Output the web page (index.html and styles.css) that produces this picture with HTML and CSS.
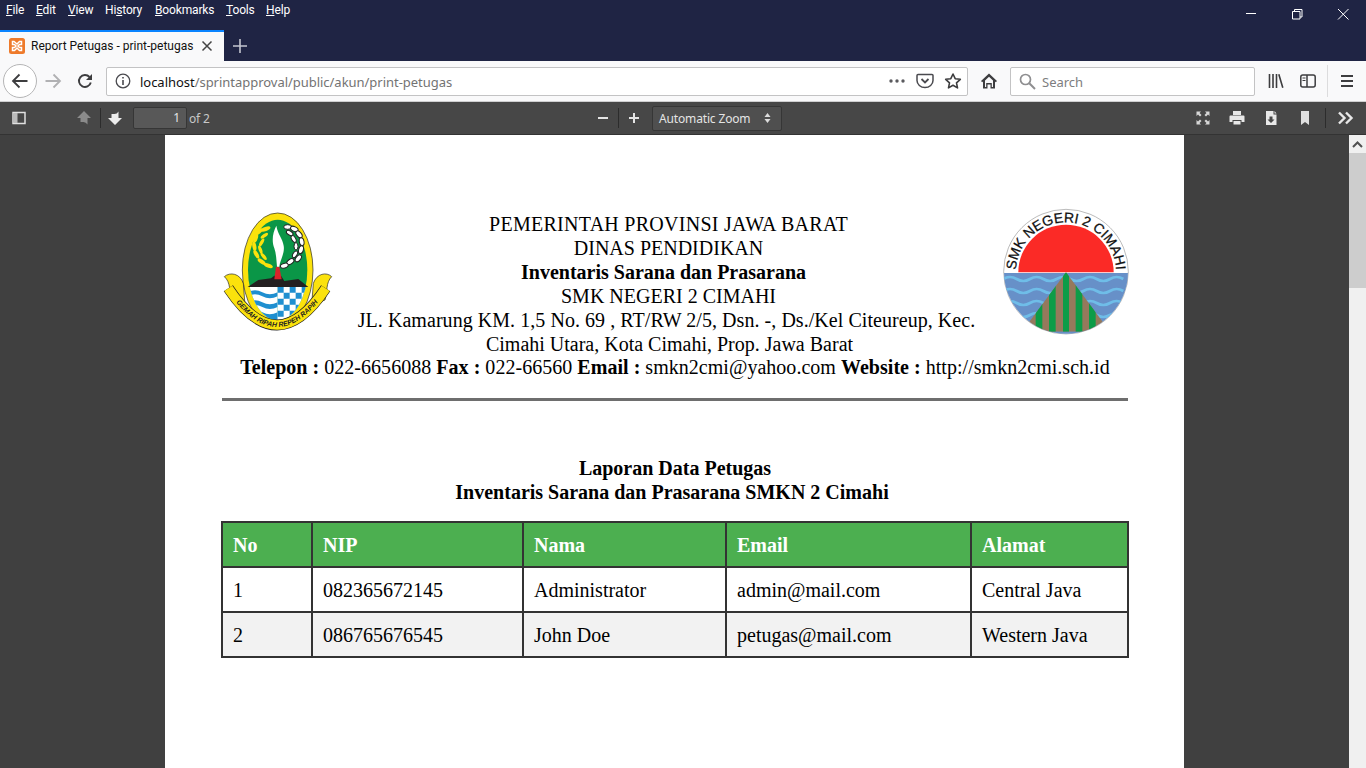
FILE: index.html
```html
<!DOCTYPE html>
<html lang="en">

<head>
    <meta charset="UTF-8">
    <meta name="viewport" content="width=device-width, initial-scale=1.0">
    <title>Report Petugas - print-petugas</title>
    <link rel="stylesheet" href="styles.css">
</head>

<body>
    <div class="menubar">
        <ul class="menu">
            <li class="mFile"><u>F</u>ile</li>
            <li class="mEdit"><u>E</u>dit</li>
            <li class="mView"><u>V</u>iew</li>
            <li class="mHistory">Hi<u>s</u>tory</li>
            <li class="mBookmarks"><u>B</u>ookmarks</li>
            <li class="mTools"><u>T</u>ools</li>
            <li class="mHelp"><u>H</u>elp</li>
        </ul>
        <div class="winBtns">
            <svg width="46" height="30" viewBox="0 0 46 30"><path d="M18 13.5h10" stroke="#fff" fill="none"/></svg>
            <svg width="46" height="30" viewBox="0 0 46 30"><path d="M18.500 11.500h7.500v7.500h-7.500zM20.500 11.500v-2h7.500v7.500h-2" stroke="#fff" fill="none"/></svg>
            <svg width="46" height="30" viewBox="0 0 46 30"><path d="M18 9l10.500 10.500M28.500 9l-10.500 10.500" stroke="#fff" fill="none"/></svg>
        </div>
    </div>

    <div class="tabbar">
        <div class="tab">
            <svg class="favicon" width="16" height="16" viewBox="0 0 16 16">
                <rect width="16" height="16" rx="2.500" fill="#ee7a2b"/>
                <path d="M5 3.500h-1.500v3h2l1.500 1.500-1.500 1.500h-2v3h2l2.500-2.500 2.500 2.500h2v-3h-2l-1.500-1.500 1.500-1.500h2v-3h-2l-2.500 2.500z" fill="none" stroke="#fff" stroke-width="1.500"/>
            </svg>
            <span class="tabTitle">Report Petugas - print-petugas</span>
            <svg class="tabClose" width="12" height="12" viewBox="0 0 12 12"><path d="M1.500 1.500l9 9M10.500 1.500l-9 9" stroke="#444" stroke-width="1.500"/></svg>
        </div>
        <svg class="newTab" width="14" height="14" viewBox="0 0 14 14"><path d="M7 0v14M0 7h14" stroke="#c3c5cf" stroke-width="1.600"/></svg>
    </div>

    <div class="navbar">
        <div class="navBtn backBtn">
            <svg width="18" height="16" viewBox="0 0 18 16"><path d="M16.500 8h-14M8.500 1.500l-6.500 6.500 6.500 6.500" stroke="#3d3d3f" stroke-width="1.800" fill="none"/></svg>
        </div>
        <div class="navBtn">
            <svg width="18" height="16" viewBox="0 0 18 16"><path d="M1.500 8h14M9.500 1.500l6.500 6.500-6.500 6.500" stroke="#b1b1b3" stroke-width="1.800" fill="none"/></svg>
        </div>
        <div class="navBtn">
            <svg width="16" height="16" viewBox="0 0 16 16"><path d="M13.800 9.500a6 6 0 1 1-1.300-5.500" stroke="#3d3d3f" stroke-width="1.900" fill="none"/><path d="M15 1v6h-6z" fill="#3d3d3f"/></svg>
        </div>
        <div class="urlbar">
            <svg class="infoIcon" width="16" height="16" viewBox="0 0 16 16"><circle cx="8" cy="8" r="6.800" stroke="#4a4a4f" stroke-width="1.300" fill="none"/><path d="M8 7v5M8 4v1.600" stroke="#4a4a4f" stroke-width="1.600"/></svg>
            <span class="url"><span class="urlHost">localhost</span>/sprintapproval/public/akun/print-petugas</span>
            <div class="urlActions">
                <svg width="28" height="16" viewBox="0 0 28 16"><circle cx="8" cy="8" r="1.700" fill="#5a5a5e"/><circle cx="14" cy="8" r="1.700" fill="#5a5a5e"/><circle cx="20" cy="8" r="1.700" fill="#5a5a5e"/></svg>
                <svg width="28" height="16" viewBox="0 0 28 16"><path d="M7 1.500h14a1 1 0 0 1 1 1v5a8 7 0 0 1-16 0v-5a1 1 0 0 1 1-1z" stroke="#4a4a4f" stroke-width="1.500" fill="none"/><path d="M10.500 6l3.500 3.500 3.500-3.500" stroke="#4a4a4f" stroke-width="1.800" fill="none"/></svg>
                <svg width="28" height="16" viewBox="0 0 28 16"><path d="M14 1l2.200 4.700 5.100.6-3.800 3.500 1 5.100-4.500-2.600-4.500 2.600 1-5.100-3.800-3.500 5.100-.6z" stroke="#3d3d3f" stroke-width="1.600" fill="none" stroke-linejoin="round"/></svg>
            </div>
        </div>
        <div class="navBtn homeBtn">
            <svg width="16" height="16" viewBox="0 0 16 16"><path d="M8 .5l8 7.500-1.200 1.200-.8-.7v7h-4.500v-4h-3v4h-4.500v-7l-.8.7-1.200-1.200z" fill="#3d3d3f"/><path d="M4 7.500l4-3.700 4 3.700v6.500h-1.200v-4h-5.600v4h-1.200z" fill="#f9f9fa"/></svg>
        </div>
        <div class="searchbar">
            <svg width="17" height="17" viewBox="0 0 17 17"><circle cx="6.500" cy="6.500" r="5" stroke="#8e8e90" stroke-width="1.700" fill="none"/><path d="M10.300 10.300l5.700 5.700" stroke="#8e8e90" stroke-width="2"/></svg>
            <span class="searchText">Search</span>
        </div>
        <div class="navBtn libBtn">
            <svg width="16" height="16" viewBox="0 0 16 16"><path d="M1.500 1v14M5 1v14M8.500 1v14M10.800 1.300l4 13.500" stroke="#3d3d3f" stroke-width="1.600" fill="none"/></svg>
        </div>
        <div class="navBtn">
            <svg width="16" height="14" viewBox="0 0 16 14"><rect x=".8" y="1" width="14.400" height="12" rx="2" stroke="#3d3d3f" stroke-width="1.500" fill="none"/><path d="M7 1v12" stroke="#3d3d3f" stroke-width="1.500"/><path d="M2.500 4h3M2.500 6.500h3" stroke="#3d3d3f"/></svg>
        </div>
        <span class="navSep"></span>
        <div class="navBtn menuBtn">
            <svg width="14" height="14" viewBox="0 0 14 14"><path d="M1 2h12M1 7h12M1 12h12" stroke="#3d3d3f" stroke-width="1.800"/></svg>
        </div>
    </div>

    <div class="pdfbar">
        <div class="pdfLeft">
            <svg class="pdfIcon sidebarIcon" width="16" height="16" viewBox="0 0 16 16"><rect x="2" y="2.500" width="12" height="11" stroke="#e0e0e0" stroke-width="1.500" fill="none"/><rect x="3" y="3" width="3.500" height="10" fill="#bbb"/></svg>
            <svg class="pdfIcon upIcon" width="16" height="16" viewBox="0 0 16 16"><path d="M8 1l7 7h-3.500v6.500q-1.500-2.500-4-2.500h-3v-4h-3.500z" fill="#8b8b8b"/></svg>
            <span class="pdfSep"></span>
            <svg class="pdfIcon downIcon" width="16" height="16" viewBox="0 0 16 16"><path d="M8 15l7-7h-3.500v-6.500q-1.500 2.500-4 2.500h-3v4h-3.500z" fill="#ececec"/></svg>
            <div class="pageInput">1</div>
            <span class="pageCount">of 2</span>
        </div>
        <svg class="pdfIcon minusIcon" width="16" height="16" viewBox="0 0 16 16"><path d="M3 8h10" stroke="#e4e4e4" stroke-width="2"/></svg>
        <span class="pdfSep zoomSep"></span>
        <svg class="pdfIcon plusIcon" width="16" height="16" viewBox="0 0 16 16"><path d="M3 8h10M8 3v10" stroke="#e4e4e4" stroke-width="2"/></svg>
        <div class="zoomSelect">
            <span>Automatic Zoom</span>
            <svg width="7" height="10" viewBox="0 0 7 10"><path d="M3.500 0l3 4h-6zM3.500 10l3-4h-6z" fill="#ddd"/></svg>
        </div>
        <div class="pdfRight">
            <svg width="16" height="16" viewBox="0 0 16 16"><path d="M1.500 1.500h4.500l-1.500 1.500 2 2-1.500 1.500-2-2-1.500 1.500zM14.500 1.500h-4.500l1.500 1.500-2 2 1.500 1.500 2-2 1.500 1.500zM1.500 14.500h4.500l-1.500-1.500 2-2-1.500-1.500-2 2-1.500-1.500zM14.500 14.500h-4.500l1.500-1.500-2-2 1.500-1.500 2 2 1.500-1.500z" fill="#d8d8d8"/></svg>
            <svg width="16" height="16" viewBox="0 0 16 16"><path d="M4 1h8v4h-8z" fill="#e8e8e8"/><path d="M1.500 5.500h13a1 1 0 0 1 1 1v5.500h-3v-2h-9v2h-3v-5.500a1 1 0 0 1 1-1z" fill="#e8e8e8"/><path d="M4.500 11h7v3.500h-7z" fill="#e8e8e8"/></svg>
            <svg width="16" height="16" viewBox="0 0 16 16"><path d="M3 1h7.500v3.500h3v10.500h-10.500z" fill="#e8e8e8"/><path d="M11.500 1l2 2.500h-2z" fill="#e8e8e8"/><path d="M8 13l3.500-3.500h-2v-3h-3v3h-2z" fill="#474747"/></svg>
            <svg width="16" height="16" viewBox="0 0 16 16"><path d="M4 1h8v14l-4-3-4 3z" fill="#e0e0e0"/></svg>
            <span class="pdfSep rightSep"></span>
            <svg width="16" height="16" viewBox="0 0 16 16"><path d="M1 2.500l5.500 5.500-5.500 5.500M8 2.500l5.500 5.500-5.500 5.500" stroke="#e8e8e8" stroke-width="2.400" fill="none"/></svg>
        </div>
    </div>

    <div class="viewer">
        <div class="viewerArea">
            <div class="page">
                <div class="kop">
                    <svg class="logoJabar" width="125" height="135" viewBox="0 0 375 405">
                        <defs>
                            <clipPath id="shieldClip"><ellipse cx="188" cy="195" rx="89" ry="151"/></clipPath>
                            <path id="ribbonArc" d="M36 255Q186 477 336 255"/>
                        </defs>
                        <path d="M28 215C45 200 75 205 85 235L90 300 50 285C42 260 48 232 28 215z" fill="#fbe20c" stroke="#222" stroke-width="2"/>
                        <path d="M350 215C335 200 305 205 295 235L290 300 330 285C338 260 332 232 350 215z" fill="#fbe20c" stroke="#222" stroke-width="2"/>
                        <ellipse cx="188" cy="195" rx="106" ry="171" fill="#fbe20c" stroke="#222" stroke-width="2"/>
                        <ellipse cx="188" cy="195" rx="89" ry="151" fill="#0a9647"/>
                        <g clip-path="url(#shieldClip)">
                            <rect x="98" y="245" width="90" height="100" fill="#fff"/>
                            <path d="M98 262q22-12 44 0t46 0v12q-24 12-46 0t-44 0zM98 292q22-12 44 0t46 0v14q-24 12-46 0t-44 0zM98 322q22-12 44 0t46 0v22h-90z" fill="#1f8fd0"/>
                            <rect x="188" y="245" width="90" height="100" fill="#fff"/>
                            <path d="M188 245h18v18h-18zM224 245h18v18h-18zM260 245h18v18h-18zM206 263h18v18h-18zM242 263h18v18h-18zM188 281h18v18h-18zM224 281h18v18h-18zM260 281h18v18h-18zM206 299h18v18h-18zM242 299h18v18h-18zM188 317h18v18h-18zM224 317h18v18h-18zM260 317h18v18h-18z" fill="#1f8fd0"/>
                        </g>
                        <path d="M98 246L130 225 168 220 178 212H198L208 228 250 222 280 246z" fill="#231f20"/>
                        <path d="M183 185h10l7 38h-22z" fill="#d8232a"/>
                        <path d="M184 62C172 85 170 110 178 130 184 148 184 165 186 185H193C195 165 210 145 206 122 203 100 188 88 184 62z" fill="#fff"/>
                        <g fill="#fbe20c">
                            <ellipse cx="152" cy="72" rx="15" ry="6" transform="rotate(-20 152 72)"/>
                            <ellipse cx="132" cy="80" rx="14" ry="6" transform="rotate(-40 132 80)"/>
                            <ellipse cx="148" cy="92" rx="13" ry="5" transform="rotate(-35 148 92)"/>
                            <ellipse cx="122" cy="100" rx="14" ry="6" transform="rotate(-70 122 100)"/>
                            <ellipse cx="140" cy="112" rx="13" ry="5" transform="rotate(-60 140 112)"/>
                            <ellipse cx="118" cy="124" rx="14" ry="6" transform="rotate(80 118 124)"/>
                            <ellipse cx="136" cy="134" rx="13" ry="5" transform="rotate(70 136 134)"/>
                            <ellipse cx="124" cy="148" rx="14" ry="6" transform="rotate(60 124 148)"/>
                            <ellipse cx="146" cy="154" rx="13" ry="5" transform="rotate(50 146 154)"/>
                            <ellipse cx="140" cy="170" rx="14" ry="6" transform="rotate(35 140 170)"/>
                            <ellipse cx="160" cy="182" rx="14" ry="6" transform="rotate(20 160 182)"/>
                        </g>
                        <g fill="#fff" stroke="#222" stroke-width="3">
                            <ellipse cx="218" cy="66" rx="12" ry="7"/>
                            <ellipse cx="238" cy="72" rx="12" ry="7" transform="rotate(25 238 72)"/>
                            <ellipse cx="224" cy="84" rx="11" ry="6" transform="rotate(30 224 84)"/>
                            <ellipse cx="252" cy="88" rx="12" ry="7" transform="rotate(50 252 88)"/>
                            <ellipse cx="236" cy="102" rx="11" ry="6" transform="rotate(60 236 102)"/>
                            <ellipse cx="260" cy="110" rx="12" ry="7" transform="rotate(80 260 110)"/>
                            <ellipse cx="243" cy="124" rx="11" ry="6" transform="rotate(90 243 124)"/>
                            <ellipse cx="258" cy="134" rx="12" ry="7" transform="rotate(105 258 134)"/>
                            <ellipse cx="240" cy="148" rx="11" ry="6" transform="rotate(120 240 148)"/>
                            <ellipse cx="250" cy="160" rx="12" ry="7" transform="rotate(130 250 160)"/>
                            <ellipse cx="226" cy="170" rx="12" ry="7" transform="rotate(145 226 170)"/>
                            <ellipse cx="208" cy="182" rx="12" ry="7" transform="rotate(165 208 182)"/>
                        </g>
                        <path d="M40 250Q186 470 332 250" fill="none" stroke="#222" stroke-width="33"/>
                        <path d="M40 250Q186 470 332 250" fill="none" stroke="#fbe20c" stroke-width="29"/>
                        <text class="ribbonText"><textPath href="#ribbonArc" startOffset="50%" text-anchor="middle">GEMAH RIPAH REPEH RAPIH</textPath></text>
                    </svg>
                    <div class="kopText">
                        <div class="line1">PEMERINTAH PROVINSI JAWA BARAT</div>
                        <div>DINAS PENDIDIKAN</div>
                        <div class="line3"><b>Inventaris Sarana dan Prasarana</b></div>
                        <div>SMK NEGERI 2 CIMAHI</div>
                        <div class="line5">JL. Kamarung KM. 1,5 No. 69 , RT/RW 2/5, Dsn. -, Ds./Kel Citeureup, Kec.</div>
                        <div class="line6">Cimahi Utara, Kota Cimahi, Prop. Jawa Barat</div>
                    </div>
                    <svg class="logoSmk" width="140" height="135" viewBox="0 0 420 405">
                        <defs>
                            <clipPath id="smkClip"><circle cx="213" cy="200" r="186"/></clipPath>
                            <clipPath id="hillClip"><path d="M213 202L345 380H81z"/></clipPath>
                            <path id="smkArc" d="M63 202A150 150 0 0 1 363 202"/>
                        </defs>
                        <circle cx="213" cy="200" r="187" fill="#fff" stroke="#999" stroke-width="2"/>
                        <path d="M70 202a143 143 0 0 1 286 0z" fill="#fb2a26"/>
                        <g clip-path="url(#smkClip)">
                            <rect x="20" y="204" width="390" height="190" fill="#6790c8"/>
                            <path d="M25 222q20-12 40 0t40 0 40 0 40 0 40 0 40 0 40 0 40 0 40 0M25 258q20-12 40 0t40 0 40 0 40 0 40 0 40 0 40 0 40 0 40 0M25 294q20-12 40 0t40 0 40 0 40 0 40 0 40 0 40 0 40 0 40 0M25 330q20-12 40 0t40 0 40 0 40 0 40 0 40 0 40 0 40 0 40 0" stroke="#6fbde8" stroke-width="8" fill="none"/>
                            <g clip-path="url(#hillClip)">
                                <rect x="80" y="200" width="270" height="190" fill="#95795c"/>
                                <path d="M204 200h18v190h-18zM162 200h20v190h-20zM242 200h20v190h-20zM122 200h20v190h-20zM282 200h20v190h-20z" fill="#0c9c48"/>
                            </g>
                        </g>
                        <text class="smkText"><textPath href="#smkArc" startOffset="50%" text-anchor="middle">SMK NEGERI 2 CIMAHI</textPath></text>
                    </svg>
                </div>
                <div class="kopContact"><b>Telepon :</b> 022-6656088 <b>Fax :</b> 022-66560 <b>Email :</b> smkn2cmi@yahoo.com <b>Website :</b> http://smkn2cmi.sch.id</div>
                <div class="rule"></div>
                <div class="reportTitle">
                    <div>Laporan Data Petugas</div>
                    <div class="titleLine2">Inventaris Sarana dan Prasarana SMKN 2 Cimahi</div>
                </div>
                <table class="dataTable">
                    <thead>
                        <tr>
                            <th class="colNo">No</th>
                            <th class="colNip">NIP</th>
                            <th class="colNama">Nama</th>
                            <th class="colEmail">Email</th>
                            <th>Alamat</th>
                        </tr>
                    </thead>
                    <tbody>
                        <tr>
                            <td>1</td>
                            <td>082365672145</td>
                            <td>Administrator</td>
                            <td>admin@mail.com</td>
                            <td>Central Java</td>
                        </tr>
                        <tr>
                            <td>2</td>
                            <td>086765676545</td>
                            <td>John Doe</td>
                            <td>petugas@mail.com</td>
                            <td>Western Java</td>
                        </tr>
                    </tbody>
                </table>
            </div>
        </div>
        <div class="scrollbar">
            <div class="scrollUp">
                <svg width="11" height="7" viewBox="0 0 11 7"><path d="M1 6l4.500-4.500 4.500 4.500" stroke="#505050" stroke-width="2" fill="none"/></svg>
            </div>
            <div class="scrollThumb"></div>
        </div>
    </div>
</body>

</html>
```

FILE: styles.css
```css
* {
    margin: 0;
    padding: 0;
    box-sizing: border-box;
}

html,
body {
    height: 100%;
    overflow: hidden;
}

body {
    display: flex;
    flex-direction: column;
    font-family: "Noto Sans", sans-serif;
    background-color: #404040;
}

li {
    list-style: none;
}

svg {
    display: block;
    flex-shrink: 0;
}

/* title bar */
.menubar {
    height: 30px;
    display: flex;
    justify-content: space-between;
    background-color: #1f2444;
}

.menu {
    display: flex;
    padding-left: 6px;
    font-family: Roboto, sans-serif;
    font-size: 12px;
    letter-spacing: -.15px;
    line-height: 20px;
    color: #fff;
}

.mFile { width: 30px; }
.mEdit { width: 32px; }
.mView { width: 37px; }
.mHistory { width: 50px; }
.mBookmarks { width: 71px; }
.mTools { width: 40px; }

.winBtns {
    display: flex;
}

/* tabs */
.tabbar {
    height: 31px;
    display: flex;
    align-items: center;
    background-color: #1f2444;
}

.tab {
    width: 224px;
    height: 31px;
    margin-top: -1px;
    display: flex;
    align-items: center;
    padding: 0 11px 0 9px;
    background-color: #f9f9fa;
    border-top: 2px solid #0a84ff;
}

.tabTitle {
    margin-left: 6px;
    font-family: Roboto, sans-serif;
    font-size: 12px;
    color: #111;
    white-space: nowrap;
}

.tabClose {
    margin-left: auto;
}

.newTab {
    margin-left: 9px;
}

/* nav */
.navbar {
    height: 41px;
    display: flex;
    align-items: center;
    padding-left: 4px;
    background-color: #f9f9fa;
    border-bottom: 1px solid #cfcfd0;
}

.navBtn {
    width: 32px;
    height: 32px;
    display: flex;
    align-items: center;
    justify-content: center;
    flex-shrink: 0;
}

.backBtn {
    width: 34px;
    height: 34px;
    margin: 0 0 0 -1px;
    background-color: #fff;
    border: 1px solid #b5b5b6;
    border-radius: 50%;
}

.urlbar {
    width: 862px;
    height: 29px;
    margin-left: 5px;
    display: flex;
    align-items: center;
    padding-left: 8px;
    background-color: #fff;
    border: 1px solid #c3c3c4;
    border-radius: 2px;
}

.url {
    margin-left: 9px;
    padding-top: 1px;
    font-size: 13px;
    letter-spacing: -.03px;
    color: #737373;
    white-space: nowrap;
}

.urlHost {
    color: #111;
}

.urlActions {
    margin-left: auto;
    display: flex;
}

.homeBtn {
    margin-left: 5px;
}

.searchbar {
    width: 245px;
    height: 29px;
    margin-left: 5px;
    display: flex;
    align-items: center;
    padding-left: 8px;
    background-color: #fff;
    border: 1px solid #c3c3c4;
    border-radius: 2px;
}

.searchText {
    margin-left: 6px;
    padding-top: 1px;
    font-size: 13px;
    color: #7d7d80;
}

.libBtn {
    margin-left: 5px;
}

.navSep {
    width: 1px;
    height: 32px;
    margin: 0 3px 0 3px;
    background-color: #dcdcdd;
}

/* pdf toolbar */
.pdfbar {
    height: 33px;
    display: flex;
    align-items: center;
    color: #e4e4e4;
    font-size: 12px;
    background-color: #474747;
    border-bottom: 1px solid #333;
}

.pdfLeft {
    width: 590px;
    display: flex;
    align-items: center;
    flex-shrink: 0;
}

.sidebarIcon { margin-left: 11px; }
.upIcon { margin-left: 49px; }
.downIcon { margin-left: 6px; }

.pdfSep {
    width: 1px;
    height: 20px;
    margin-left: 8px;
    background-color: #2c2c2c;
}

.pageInput {
    width: 54px;
    height: 22px;
    margin-left: 10px;
    padding-right: 6px;
    text-align: right;
    line-height: 20px;
    color: #e4e4e4;
    background-color: #585858;
    border: 1px solid #363636;
    border-radius: 2px;
}

.pageCount {
    margin-left: 2px;
    letter-spacing: -.2px;
    color: #c8c8c8;
}

.minusIcon { margin-left: 5px; }
.zoomSep { margin-left: 7px; }
.plusIcon { margin-left: 7px; }

.zoomSelect {
    width: 130px;
    height: 25px;
    margin-left: 10px;
    display: flex;
    align-items: center;
    justify-content: space-between;
    padding: 0 10px 0 6px;
    letter-spacing: -.15px;
    background-color: #4f4f4f;
    border: 1px solid #363636;
    border-radius: 2px;
}

.pdfRight {
    margin-left: auto;
    padding-right: 12px;
    display: flex;
    align-items: center;
    gap: 18px;
}

.rightSep {
    margin: 0 -6px 0 -6px;
}

/* viewer */
.viewer {
    flex: 1;
    min-height: 0;
    display: flex;
}

.viewerArea {
    flex: 1;
    overflow: hidden;
    background-color: #404040;
}

.page {
    width: 1019px;
    height: 900px;
    margin: 0 auto;
    padding: 70px 56px 0 57px;
    background-color: #fff;
    font-family: "Liberation Serif", serif;
    font-size: 20px;
    line-height: 24px;
    color: #000;
}

.kop {
    display: grid;
    grid-template-columns: 110px 1fr 123px;
}

.logoJabar {
    margin-left: -7px;
}

.logoSmk {
    margin-left: -10px;
}

.ribbonText {
    font-family: "Liberation Sans", sans-serif;
    font-size: 21px;
    font-weight: bold;
    font-style: italic;
    fill: #222;
}

.smkText {
    font-family: "Liberation Sans", sans-serif;
    font-size: 42px;
    fill: #111;
    stroke: #111;
    stroke-width: .8px;
}

.kopText {
    padding-top: 7px;
    text-align: center;
    white-space: nowrap;
}

.line1 { letter-spacing: .27px; }
.line3 { padding-right: 10px; }
.line5 { padding-right: 4px; letter-spacing: .05px; }
.line6 { padding-left: 2px; }

.kopContact {
    margin-top: -1px;
    text-align: center;
    white-space: nowrap;
    letter-spacing: .03px;
}

.rule {
    height: 3px;
    margin-top: 19px;
    background-color: #6e6e6e;
}

.reportTitle {
    margin-top: 55px;
    font-weight: bold;
    text-align: center;
}

.titleLine2 {
    padding-right: 6px;
}

/* table */
.dataTable {
    width: 908px;
    margin: 17px 0 0 -1px;
    table-layout: fixed;
    border-collapse: collapse;
}

.dataTable th,
.dataTable td {
    height: 45px;
    padding: 0 10px;
    text-align: left;
    border: 2px solid #333;
}

.dataTable th {
    color: #fff;
    background-color: #4caf50;
}

.dataTable tbody tr:nth-child(2) {
    background-color: #f2f2f2;
}

.colNo { width: 90px; }
.colNip { width: 211px; }
.colNama { width: 203px; }
.colEmail { width: 245px; }

/* scrollbar */
.scrollbar {
    width: 17px;
    flex-shrink: 0;
    background-color: #f0f0f0;
}

.scrollUp {
    height: 18px;
    display: flex;
    align-items: center;
    justify-content: center;
}

.scrollThumb {
    height: 135px;
    background-color: #cdcdcd;
}
```
